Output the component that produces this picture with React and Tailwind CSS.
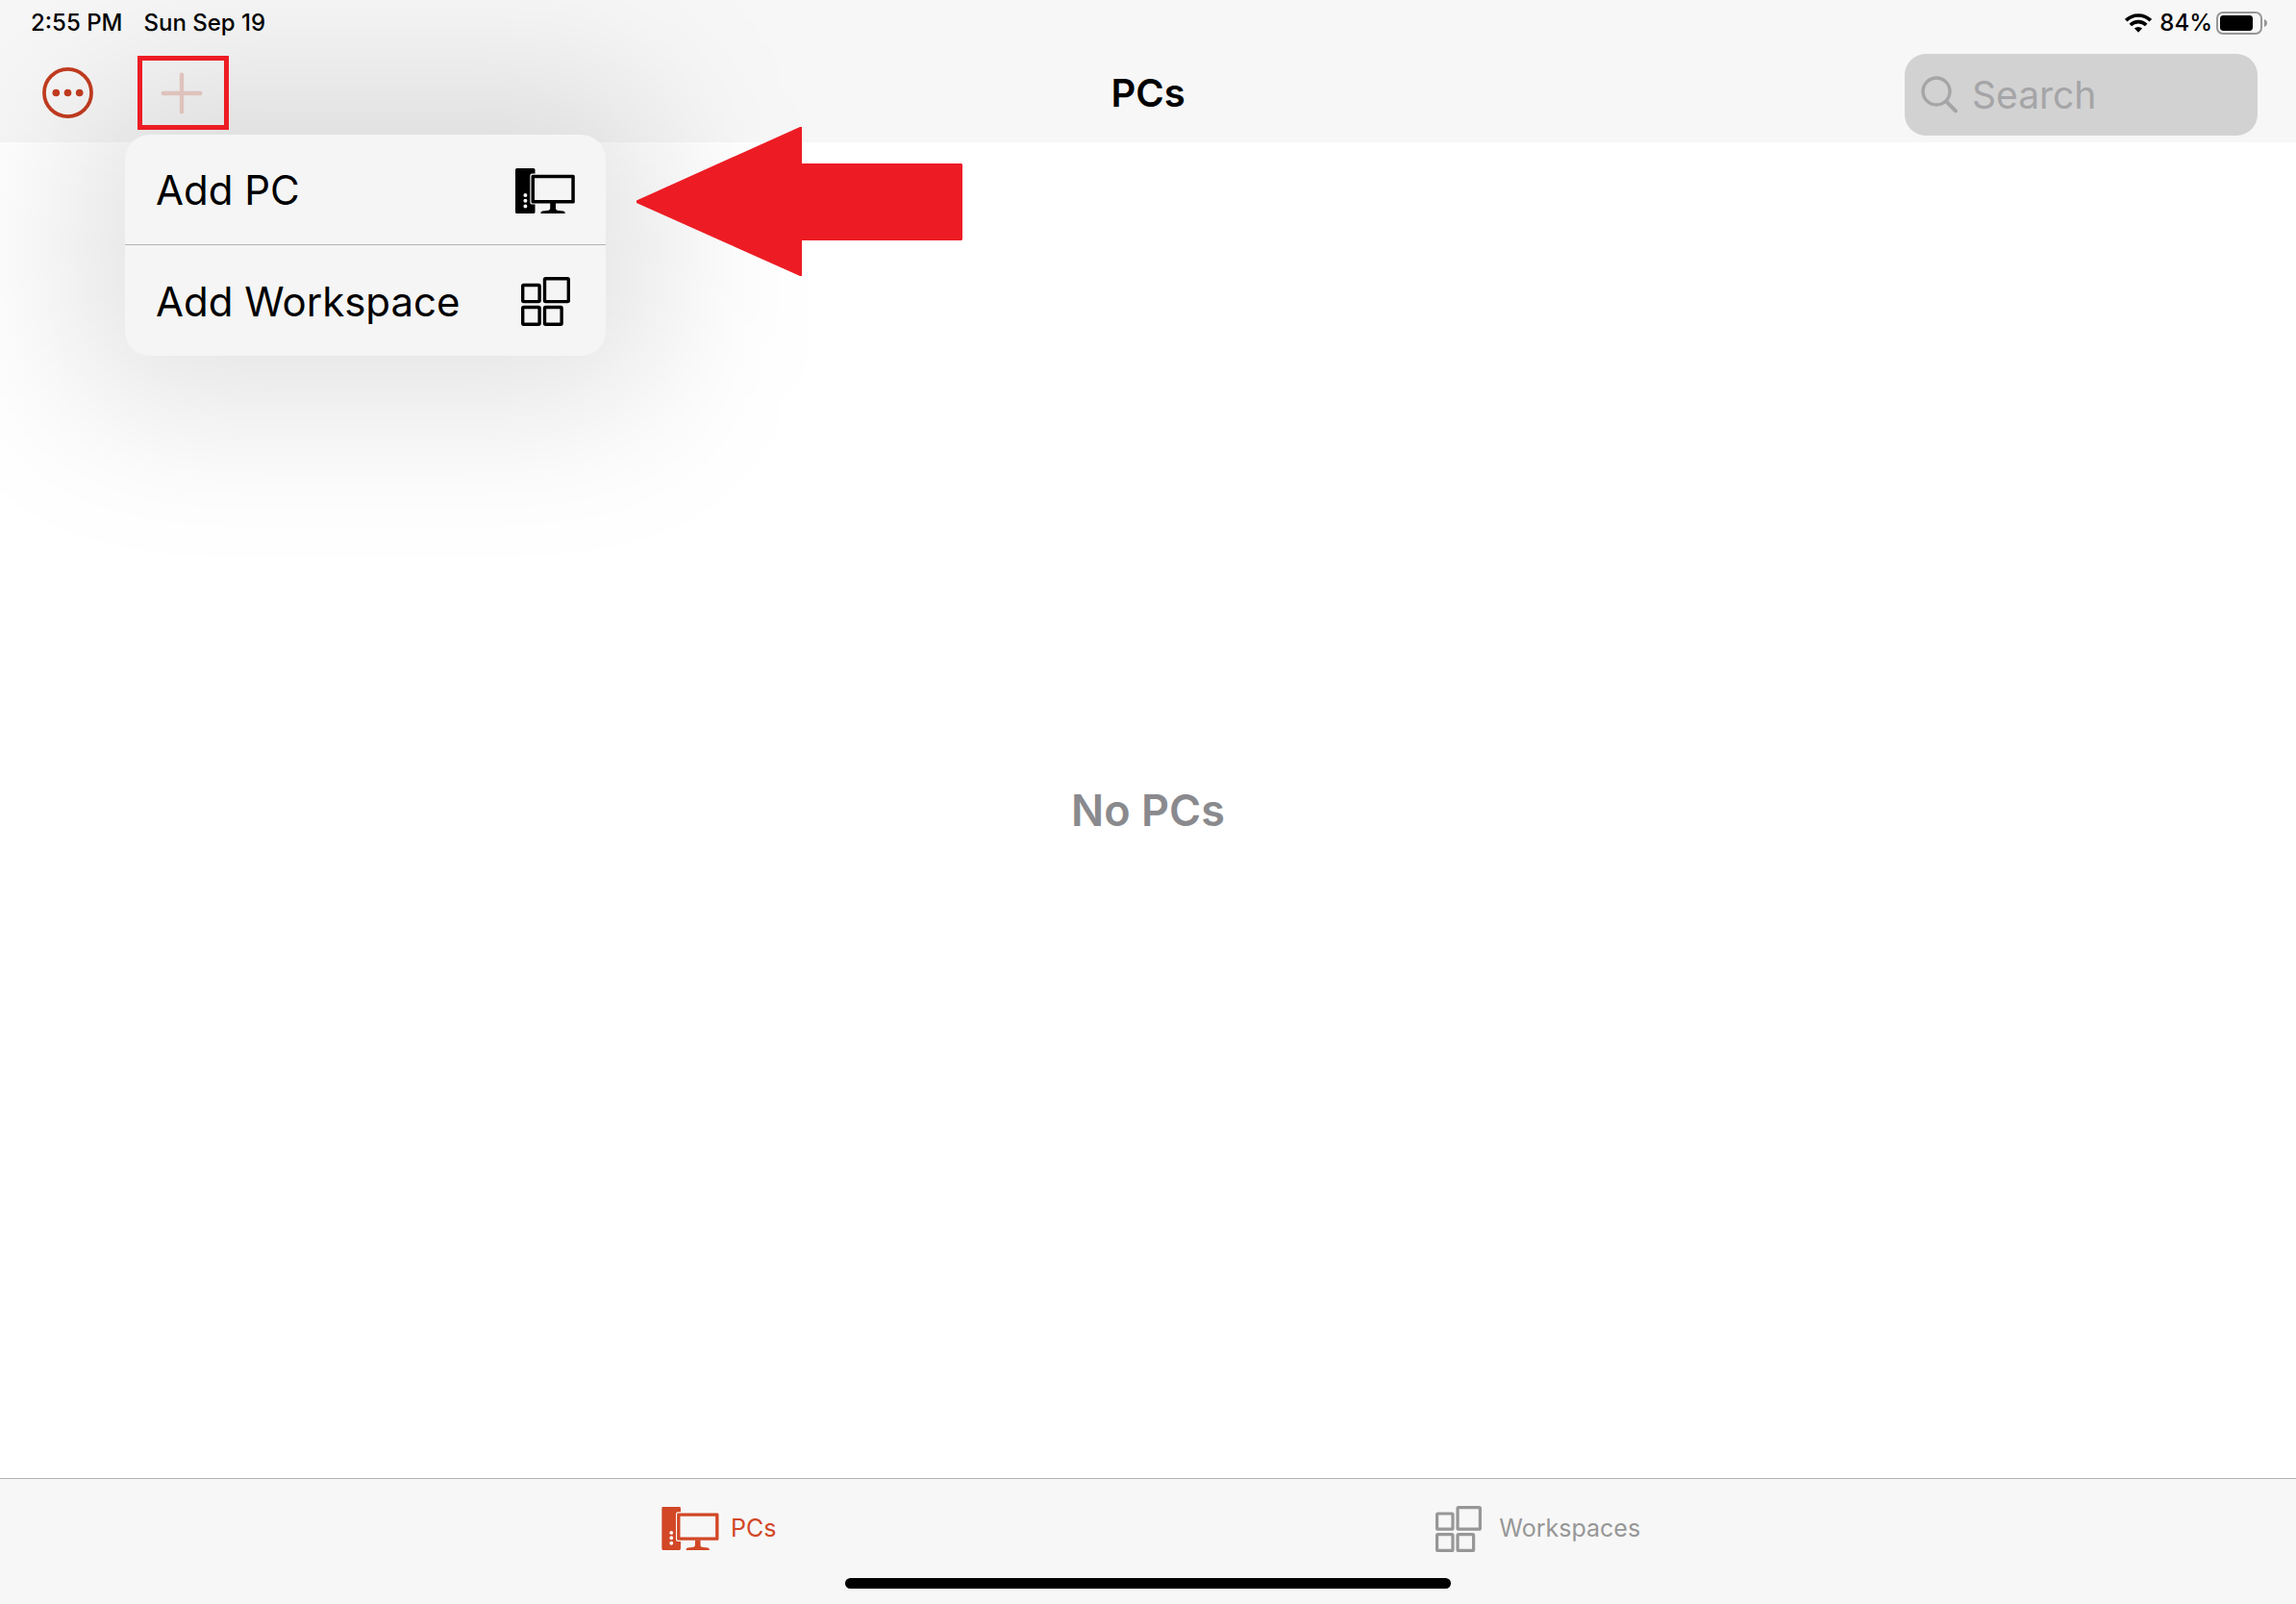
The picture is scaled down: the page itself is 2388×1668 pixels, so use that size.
import React, { useState } from 'react';

// --- Icons ---
const PcIcon = ({ className }) => (
  <svg className={className} viewBox="0 0 62 47" fill="currentColor" aria-hidden="true">
    <path
      fillRule="evenodd"
      d="M1.5 0H19a1.5 1.5 0 0 1 1.5 1.5V5.6H17.5a2.2 2.2 0 0 0-2.2 2.2V35.4a2.2 2.2 0 0 0 2.2 2.2h3V45.5a1.5 1.5 0 0 1-1.5 1.5H1.5A1.5 1.5 0 0 1 0 45.5V1.5A1.5 1.5 0 0 1 1.5 0ZM10.4 26.1a2 2 0 1 0 0 4 2 2 0 0 0 0-4Zm0 5.6a2 2 0 1 0 0 4 2 2 0 0 0 0-4Zm0 5.7a2 2 0 1 0 0 4 2 2 0 0 0 0-4Z"
    />
    <path
      fillRule="evenodd"
      d="M18 6.8H60.3a1.5 1.5 0 0 1 1.5 1.5V34.9a1.5 1.5 0 0 1-1.5 1.5H18a1.5 1.5 0 0 1-1.5-1.5V8.3A1.5 1.5 0 0 1 18 6.8ZM20 10.2V33H58.3V10.2Z"
    />
    <path d="M36.2 36H42V41.5q0 2.2 3 2.4l5 .5q1.8.4 1.8 2.6H26.3q0-2.2 1.8-2.6l5-.5q3-.2 3.1-2.4Z" />
  </svg>
);

const WorkspaceIcon = ({ className }) => (
  <svg className={className} viewBox="0 0 51 51" fill="none" stroke="currentColor" strokeWidth="3.4" aria-hidden="true">
    <rect x="1.7" y="8.5" width="17.4" height="17.1" rx="1" />
    <rect x="24.5" y="1.7" width="24.8" height="23.9" rx="1" />
    <rect x="1.7" y="31.5" width="17.4" height="17.8" rx="1" />
    <rect x="24.5" y="31.5" width="17.6" height="17.8" rx="1" />
  </svg>
);

const MoreIcon = () => (
  <svg className="h-[53px] w-[53px]" viewBox="0 0 54 54" fill="currentColor" aria-hidden="true">
    <circle cx="27" cy="27" r="25" fill="none" stroke="currentColor" strokeWidth="3.8" />
    <circle cx="14.6" cy="27" r="3.9" />
    <circle cx="27" cy="27" r="3.9" />
    <circle cx="39.4" cy="27" r="3.9" />
  </svg>
);

const PlusIcon = () => (
  <svg className="h-11 w-11" viewBox="0 0 44 44" stroke="currentColor" strokeWidth="4.4" strokeLinecap="round" aria-hidden="true">
    <path d="M22 2.7V41.3M2.7 22H41.3" />
  </svg>
);

const SearchIcon = () => (
  <svg className="h-10 w-10 shrink-0" viewBox="0 0 40 40" fill="none" stroke="currentColor" strokeWidth="3.4" strokeLinecap="round" aria-hidden="true">
    <circle cx="17" cy="16" r="14" />
    <path d="M27.4 26.6 37 36.4" strokeWidth="4" />
  </svg>
);

const WifiIcon = () => (
  <svg className="h-5 w-7" viewBox="0 0 28 20" fill="none" stroke="currentColor" strokeWidth="3.6" aria-hidden="true">
    <path d="M1.2 7.2a18.2 18.2 0 0 1 25.6 0" />
    <path d="M5.8 12a11.7 11.7 0 0 1 16.4 0" />
    <path d="M14 19.8 9.9 15.6a5.9 5.9 0 0 1 8.2 0Z" fill="currentColor" stroke="none" />
  </svg>
);

const BatteryIcon = () => (
  <svg className="h-6 w-[54px]" viewBox="0 0 54 24" aria-hidden="true">
    <rect x="1" y="1" width="46" height="22" rx="6" fill="none" stroke="#979797" strokeWidth="2" />
    <rect x="4" y="4" width="34" height="16" rx="3.4" fill="#000" />
    <path d="M50 8q3 1.2 3 4t-3 4Z" fill="#979797" />
  </svg>
);

// --- Add menu ---
const MenuItem = ({ label, icon }) => (
  <button role="menuitem" className="flex h-[115px] w-full items-center justify-between px-8 pt-0.5">
    <span>{label}</span>
    <span className="flex w-[62px] justify-center">{icon}</span>
  </button>
);

const AddMenu = () => (
  <div className="absolute top-full -left-[13px] z-10 mt-[5px] w-[500px]">
    {/* Wide soft shadow */}
    <div className="pointer-events-none absolute -inset-14 rounded-[66px] bg-black/11 blur-[80px]" />
    <div
      role="menu"
      className="relative divide-y divide-[#b4b4b4] rounded-[26px] bg-[#f5f5f5] text-[42px] leading-none text-black"
    >
      <MenuItem label="Add PC" icon={<PcIcon className="h-[47px] w-[62px]" />} />
      <MenuItem label="Add Workspace" icon={<WorkspaceIcon className="h-[51px] w-[51px]" />} />
    </div>
    {/* Pointer to the first item */}
    <svg className="absolute -top-2 left-full ml-8 h-[155px] w-[339px]" viewBox="0 0 339 155" fill="#ed1c24" aria-hidden="true">
      <path d="M0 76.500 170 0h2V38H338l1 1V117l-1 1H172V155h-2L0 79Z" />
    </svg>
  </div>
);

// --- Bars ---
const StatusBar = () => (
  <div className="flex h-12 items-center justify-between pl-8 pr-[29px] text-2xl font-medium">
    <div className="flex gap-[22px]">
      <span>2:55 PM</span>
      <span>Sun Sep 19</span>
    </div>
    <div className="flex items-center">
      <WifiIcon />
      <span className="ml-2 mr-1">84%</span>
      <BatteryIcon />
    </div>
  </div>
);

const NavBar = ({ menuOpen, onToggleMenu }) => {
  const [query, setQuery] = useState('');

  return (
    <div className="grid h-[100px] grid-cols-[1fr_auto_1fr] items-center px-10 pb-[3px]">
      <div className="ml-1 flex items-center gap-[46px]">
        <button aria-label="More" className="text-[#c43c20]">
          <MoreIcon />
        </button>
        <div className="relative">
          <button
            aria-label="Add"
            aria-expanded={menuOpen}
            onClick={onToggleMenu}
            className="relative z-20 flex h-[77px] w-[95px] items-center justify-center border-[5px] border-[#ed1c24] pr-1 text-[#dfc2bc]"
          >
            <PlusIcon />
          </button>
          {menuOpen && <AddMenu />}
        </div>
      </div>
      <h1 className="text-[40px] leading-none font-semibold">PCs</h1>
      <label className="mt-1 flex h-[85px] w-[367px] items-center gap-[14px] justify-self-end rounded-[22px] bg-[#d2d2d2] px-4 text-[#a5a5a7]">
        <SearchIcon />
        <input
          type="text"
          aria-label="Search"
          placeholder="Search"
          value={query}
          onChange={(e) => setQuery(e.target.value)}
          className="w-full min-w-0 bg-transparent text-[39px] leading-none text-black outline-none placeholder:text-[#a5a5a7]"
        />
      </label>
    </div>
  );
};

const TabBar = () => (
  <footer className="border-t border-[#b2b2b2] bg-[#f7f7f7]">
    <nav className="flex h-[103px] items-center justify-center gap-[686px] pl-1.5 text-[25px] leading-none">
      <a href="#pcs" className="flex items-center gap-3 text-[#d24726]">
        <PcIcon className="h-[45px] w-[60px]" />
        PCs
      </a>
      <a href="#workspaces" className="flex items-center gap-[18px] text-[#979797]">
        <WorkspaceIcon className="h-12 w-12" />
        Workspaces
      </a>
    </nav>
    <div className="mx-auto mb-4 h-[11px] w-[630px] rounded-full bg-black" />
  </footer>
);

// --- Main App Component ---
export default function App() {
  const [menuOpen, setMenuOpen] = useState(true);

  return (
    <div className="flex min-h-screen flex-col overflow-x-hidden bg-white font-['Inter',sans-serif] text-black">
      <header className="relative z-10 bg-[#f7f7f7]">
        <StatusBar />
        <NavBar menuOpen={menuOpen} onToggleMenu={() => setMenuOpen(!menuOpen)} />
      </header>
      <main className="flex flex-1 items-center justify-center">
        <p className="text-[45px] leading-none font-semibold text-[#8a8a8e]">No PCs</p>
      </main>
      <TabBar />
    </div>
  );
}
